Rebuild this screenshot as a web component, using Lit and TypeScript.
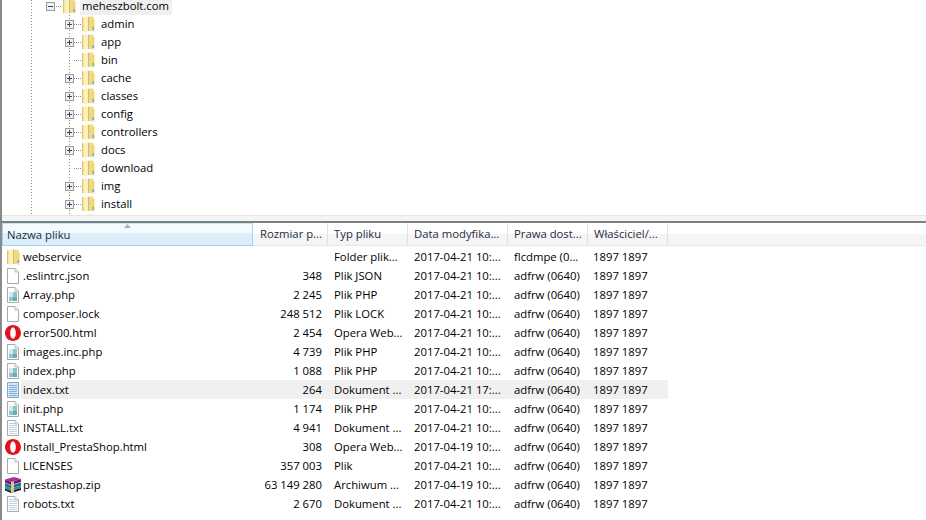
import { LitElement, html, css, svg } from "lit";
import { customElement } from "lit/decorators.js";

const folder = html`<svg class="ic" viewBox="0 0 14 16" width="14" height="16">
  <path d="M1 1.5 L7 .5 H12.5 V15 H1 Z" fill="#f5e096"/>
  <path d="M7.5 1 H11.5 V15 H7.5 Z" fill="#f0d98a"/>
  <path d="M11 3 H13.5 V15.5 H11 Z" fill="#f3d66a"/>
  <path d="M1 1.5 L2.5 1.2 V15 H1 Z" fill="#e3c164"/>
  <path d="M2.5 1.2 L7 .5 V15.5 H2.5 Z" fill="#faf1c2"/>
  <rect x="7" y="1" width="1" height="14" fill="#dcbb5c"/>
  <rect x="11.5" y="11" width="1.5" height="3" fill="#6bb0e0"/>
  <rect x="11.5" y="14" width="1.5" height="1" fill="#e9eef2"/>
</svg>`;

const docBase = svg`<path d="M1.5 .5 H9 L12.5 4 V15.5 H1.5 Z" fill="#fff" stroke="#a9a9a9"/><path d="M9 .5 V4 H12.5" fill="#eee" stroke="#bdbdbd"/>`;
const blank = html`<svg class="ic" viewBox="0 0 14 16" width="14" height="16">${docBase}</svg>`;
const php = html`<svg class="ic" viewBox="0 0 14 16" width="14" height="16">${docBase}
  <rect x="3" y="5" width="8" height="9" fill="#8fc3cf"/><rect x="3" y="5" width="4" height="5" fill="#d3e9ea"/><rect x="7" y="10" width="4" height="4" fill="#6fa7bb"/></svg>`;
const lines = (c: string) => [4, 6, 8, 10, 12, 14].map((y) => svg`<rect x="3" y="${y - 1}" width="8" height="1" fill="${c}"/>`);
const txt = html`<svg class="ic" viewBox="0 0 14 16" width="14" height="16">${docBase}${lines("#bcd0e2")}</svg>`;
const txtSel = html`<svg class="ic" viewBox="0 0 14 16" width="14" height="16">
  <path d="M1.5 .5 H12.5 V15.5 H1.5 Z" fill="#d5e6f7" stroke="#7da7cf"/>${lines("#86b1dc")}</svg>`;
const opera = html`<svg class="ic wide" viewBox="0 0 16 16" width="16" height="16">
  <path fill-rule="evenodd" fill="#e0141e" d="M8 0 C12.4 0 16 3.6 16 8 C16 12.4 12.4 16 8 16 C3.6 16 0 12.4 0 8 C0 3.6 3.6 0 8 0 Z M8 2.4 C6.2 2.4 5.2 5 5.2 8 C5.2 11 6.2 13.6 8 13.6 C9.8 13.6 10.8 11 10.8 8 C10.8 5 9.8 2.4 8 2.4 Z"/></svg>`;
const rar = html`<svg class="ic wide" viewBox="0 0 16 16" width="16" height="16">
  <path d="M0 2.5 L9 0 L16 2 L6 5 Z" fill="#a0329a"/><path d="M0 2.5 L6 5 L16 2 V5 L6 8 L0 5.5 Z" fill="#6d1c5e"/>
  <path d="M0 6 L6 8.5 L16 5.5 V8.5 L6 11.5 L0 9 Z" fill="#2a5cc4"/>
  <path d="M0 9 L6 11.5 L16 8.5 V11 L6 14 L0 11.5 Z" fill="#2fa23c"/>
  <path d="M0 11.5 L6 14 L16 11 V13 L6 16 L0 13.5 Z" fill="#161a55"/>
  <path d="M6 5 L9 4 V15 L6 16 Z" fill="#d8c88c"/></svg>`;

const expander = (minus: boolean) => html`<svg class="exp" viewBox="0 0 9 9" width="9" height="9">
  <rect x=".5" y=".5" width="8" height="8" fill="#f1f1f1" stroke="#9a9a9a"/>
  <rect x="2" y="4" width="5" height="1" fill="#2b4a7a"/>
  ${minus ? "" : svg`<rect x="4" y="2" width="1" height="5" fill="#2b4a7a"/>`}
</svg>`;

const children: [string, boolean][] = [
  ["admin", true], ["app", true], ["bin", false], ["cache", true], ["classes", true],
  ["config", true], ["controllers", true], ["docs", true], ["download", false], ["img", true], ["install", true],
];

const D = "2017-04-21 10:...";
const O = "1897 1897";
const P = "adfrw (0640)";
const files: [unknown, string, string, string, string, string][] = [
  [folder, "webservice", "", "Folder plik...", D, "flcdmpe (0..."],
  [blank, ".eslintrc.json", "348", "Plik JSON", D, P],
  [php, "Array.php", "2 245", "Plik PHP", D, P],
  [blank, "composer.lock", "248 512", "Plik LOCK", D, P],
  [opera, "error500.html", "2 454", "Opera Web...", D, P],
  [php, "images.inc.php", "4 739", "Plik PHP", D, P],
  [php, "index.php", "1 088", "Plik PHP", D, P],
  [txtSel, "index.txt", "264", "Dokument ...", "2017-04-21 17:...", P],
  [php, "init.php", "1 174", "Plik PHP", D, P],
  [txt, "INSTALL.txt", "4 941", "Dokument ...", D, P],
  [opera, "Install_PrestaShop.html", "308", "Opera Web...", "2017-04-19 10:...", P],
  [blank, "LICENSES", "357 003", "Plik", D, P],
  [rar, "prestashop.zip", "63 149 280", "Archiwum ...", "2017-04-19 10:...", P],
  [txt, "robots.txt", "2 670", "Dokument ...", D, P],
];

@customElement("app-root")
export class AppRoot extends LitElement {
  static styles = css`
    :host { display: block; width: 926px; height: 520px; overflow: hidden; background: #fff;
      font: 11.3px "Open Sans", "Noto Sans", sans-serif; color: #000; }
    .tree { height: 215px; overflow: hidden; border-left: 2px solid #8a8a8a; box-sizing: border-box;
      background-image: repeating-linear-gradient(to bottom, #8f8f8f 0 1px, transparent 1px 3px);
      background-size: 1px 100%; background-position: 29px 0; background-repeat: no-repeat; }
    .tree-in { margin-top: -3px; }
    .root { height: 18px; display: flex; align-items: center; padding-left: 44px; }
    .root .exp { margin-right: 1px; }
    .dash-s { width: 6px; height: 1px; background-image: repeating-linear-gradient(to right, #8f8f8f 0 1px, transparent 1px 2px); }
    .root .name { margin: 3px 0 0 4px; padding: 0 2px; height: 15px; line-height: 12px; width: 88px; background: #f0f0f0; }
    .kids { background-image: repeating-linear-gradient(to bottom, #8f8f8f 0 1px, transparent 1px 3px);
      background-size: 1px 100%; background-position: 67px 0; background-repeat: no-repeat; }
    .kid { height: 18px; display: flex; align-items: center; padding-left: 63px; }
    .slot { width: 9px; height: 9px; display: flex; }
    .dash { width: 7px; height: 1px; background-image: repeating-linear-gradient(to right, #8f8f8f 0 1px, transparent 1px 2px); }
    .kid .name { margin-left: 6px; padding-bottom: 2px; }
    .ic, .exp { flex: none; display: block; }
    .split { height: 6px; background: linear-gradient(#e6e6e6 0 1px, #f4f4f4 1px); border-left: 2px solid #8a8a8a; }
    .list { border-top: 2px solid #7f7f7f; border-left: 2px solid #8a8a8a; height: 299px; box-sizing: border-box; overflow: hidden; }
    .head, .row { display: grid; grid-template-columns: 251px 75px 80px 100px 80px 80px; }
    .head { height: 23px; box-sizing: border-box; background: linear-gradient(#fff 0 50%, #f4f5f6 50%); border-bottom: 1px solid #e8e8e8; }
    .th { position: relative; border-right: 1px solid #e2e3e5; padding: 0 0 0 6px; line-height: 22px; white-space: nowrap; overflow: hidden; color: #1f2a3a; }
    .th:nth-child(2) { padding-left: 7px; }
    .th.active { background: linear-gradient(#f4fbff 0 45%, #dceff9 45%); border: 1px solid #9fd3ef; border-top-color: #bfe3f5; line-height: 22px; padding-left: 4px; height: 23px; box-sizing: border-box; overflow: visible; }
    .sort { position: absolute; left: 121px; top: 0; width: 7px; height: 4px; }
    .rows { padding-top: 1px; }
    .row { height: 19px; line-height: 19px; white-space: nowrap; }
    .c { padding-left: 6px; overflow: hidden; }
    .c.owner { padding-left: 5px; }
    .c.size { padding: 0 6px 0 0; text-align: right; }
    .c.n { padding-left: 4px; display: flex; align-items: center; }
    .n .name { padding-left: 2px; margin-left: 1px; flex: 1; align-self: stretch; }
    .n .wide { margin-left: -1px; margin-right: -1px; }
    .row.sel .name, .row.sel .c:not(.n) { background: #f0f0f0; }
  `;

  render() {
    return html`
      <div class="tree"><div class="tree-in">
        <div class="root">${expander(true)}<span class="dash-s"></span>${folder}<span class="name">meheszbolt.com</span></div>
        <div class="kids">
          ${children.map(([n, e]) => html`<div class="kid">
            <span class="slot">${e ? expander(false) : ""}</span><span class="dash"></span>${folder}<span class="name">${n}</span>
          </div>`)}
          <div class="kid"><span class="slot"></span><span class="dash"></span>${folder}</div>
        </div>
      </div></div>
      <div class="split"></div>
      <div class="list">
        <div class="head">
          <div class="th active"><span>Nazwa pliku</span>
            <svg class="sort" viewBox="0 0 7 4"><path d="M3.5 0 L7 4 H0 Z" fill="#9fb4c8"/></svg></div>
          <div class="th">Rozmiar p...</div><div class="th">Typ pliku</div><div class="th">Data modyfika...</div>
          <div class="th">Prawa dost...</div><div class="th">Właściciel/...</div>
        </div>
        <div class="rows">
          ${files.map((f) => html`<div class="row ${f[1] === "index.txt" ? "sel" : ""}">
            <div class="c n">${f[0]}<span class="name">${f[1]}</span></div>
            <div class="c size">${f[2]}</div><div class="c">${f[3]}</div><div class="c">${f[4]}</div><div class="c">${f[5]}</div><div class="c owner">${O}</div>
          </div>`)}
        </div>
      </div>`;
  }
}
